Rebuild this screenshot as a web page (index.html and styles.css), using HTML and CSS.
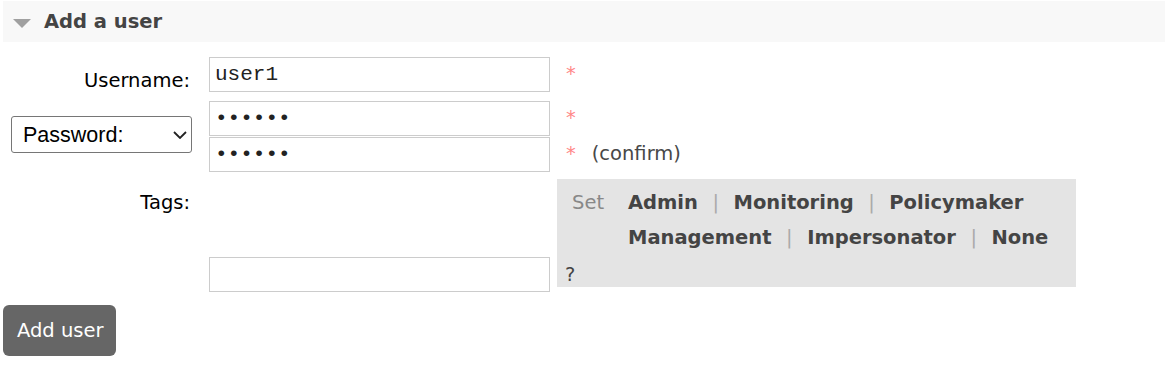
FILE: index.html
```html
<!DOCTYPE html>
<html lang="en">
<head>
    <meta charset="UTF-8">
    <title>Add a user</title>
    <link rel="stylesheet" href="styles.css">
</head>
<body>
    <div class="section">
        <h2 class="section-head"><span class="arrow"></span>Add a user</h2>

        <form class="user-form">
            <div class="row row-user">
                <label class="field-label" for="username">Username:</label>
                <div class="field">
                    <input type="text" id="username" value="user1"><span class="mand">*</span>
                </div>
            </div>

            <div class="row row-pass">
                <div class="field-label select-cell">
                    <div class="select-wrap">
                        <select id="passwordMode">
                            <option>Password:</option>
                            <option>Hashed password:</option>
                        </select>
                        <svg class="chevron" width="14" height="8" viewBox="0 0 14 8"><path d="M1 1 L7 7 L13 1" fill="none" stroke="#222" stroke-width="1.8"/></svg>
                    </div>
                </div>
                <div class="field field-stack">
                    <div><input type="password" value="secret"><span class="mand">*</span></div>
                    <div><input type="password" value="secret"><span class="mand">*</span><span class="note">(confirm)</span></div>
                </div>
            </div>

            <div class="row row-tags">
                <label class="field-label" for="tags">Tags:</label>
                <div class="field tags-field">
                    <input type="text" id="tags" class="tags-input">
                    <div class="tag-box">
                        <div class="tag-line">
                            <span class="tag-set">Set</span><span class="tag-link">Admin</span><span class="sep">|</span><span class="tag-link">Monitoring</span><span class="sep">|</span><span class="tag-link">Policymaker</span>
                        </div>
                        <div class="tag-line indent">
                            <span class="tag-link">Management</span><span class="sep">|</span><span class="tag-link">Impersonator</span><span class="sep">|</span><span class="tag-link">None</span>
                        </div>
                        <div class="help">?</div>
                    </div>
                </div>
            </div>

            <button type="button" class="add-btn">Add user</button>
        </form>
    </div>
</body>
</html>
```

FILE: styles.css
```css
body {
    margin: 0;
    padding: 1px 0 0 3px;
    font-family: 'DejaVu Sans', Verdana, sans-serif;
    font-size: 19.5px;
    color: #000;
    background: #fff;
}

.section-head {
    display: flex;
    align-items: center;
    height: 41px;
    margin: 0;
    padding-left: 10px;
    background-color: #f8f8f8;
    color: #444;
    font-size: 19.5px;
    font-weight: bold;
}

.arrow {
    width: 0;
    height: 0;
    border-left: 9px solid transparent;
    border-right: 9px solid transparent;
    border-top: 9px solid #a0a0a0;
    margin-right: 13px;
    margin-top: 3px;
}

.row {
    display: flex;
    align-items: flex-start;
}

.row-user {
    margin-top: 15px;
}

.row-pass {
    margin-top: 9px;
}

.row-tags {
    margin-top: 7px;
}

.field-label {
    width: 187px;
    padding-right: 19px;
    padding-top: 12px;
    line-height: 23px;
    text-align: right;
}

.select-cell {
    text-align: left;
    padding: 15px 0 0 8px;
    width: 198px;
    padding-right: 0;
}

.select-wrap {
    position: relative;
    width: 181px;
}

select {
    appearance: none;
    width: 181px;
    height: 37px;
    padding: 0 0 0 11px;
    border: 1px solid #767676;
    border-radius: 3px;
    background: #fff;
    color: #000;
    font-family: 'Liberation Sans', Arial, sans-serif;
    font-size: 21.5px;
}

.chevron {
    position: absolute;
    right: 5px;
    top: 15px;
    pointer-events: none;
}

input {
    box-sizing: border-box;
    width: 341px;
    height: 35px;
    margin: 0;
    padding: 0 5px;
    border: 1px solid #ccc;
    font-family: 'Liberation Mono', 'Courier New', monospace;
    font-size: 21px;
    color: #222;
    vertical-align: baseline;
}

.field-stack div + div {
    margin-top: 1px;
}

.mand {
    margin-left: 16px;
    color: #f88;
}

.note {
    margin-left: 16px;
    color: #484848;
}

.tags-field {
    display: flex;
    align-items: flex-start;
}

.tags-input {
    margin-top: 78px;
}

.tag-box {
    box-sizing: border-box;
    width: 519px;
    height: 108px;
    margin-left: 7px;
    padding: 6px 0 0 15px;
    background-color: #e4e4e4;
    color: #444;
}

.tag-line {
    line-height: 35px;
    white-space: nowrap;
}

.tag-line.indent {
    padding-left: 56px;
}

.tag-set {
    display: inline-block;
    width: 56px;
    color: #888;
}

.tag-link {
    font-weight: bold;
}

.sep {
    margin: 0 14.5px;
    color: #aaa;
}

.help {
    margin: 8px 0 0 -7px;
    line-height: 24px;
}

.add-btn {
    margin-top: 13px;
    height: 51px;
    padding: 0 13px 0 14px;
    border: none;
    border-radius: 6px;
    background-color: #666;
    color: #fff;
    font-family: 'DejaVu Sans', Verdana, sans-serif;
    font-size: 19.5px;
    cursor: pointer;
}
```
